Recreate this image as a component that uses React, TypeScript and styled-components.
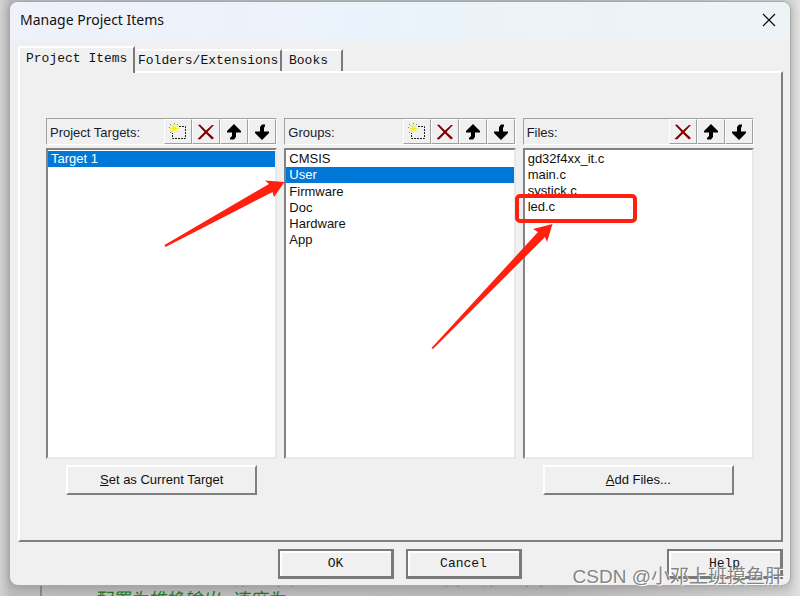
import React from "react";
import styled, { createGlobalStyle, css } from "styled-components";

const Global = createGlobalStyle`
  *, *::before, *::after { box-sizing: border-box; }
  html, body, #root { height: 100%; margin: 0; }
  body {
    overflow: hidden;
    font-family: "Liberation Sans", Arial, sans-serif;
    font-size: 13px;
    color: #111;
  }
  button { font: inherit; color: inherit; padding: 0; margin: 0; border-radius: 0; }
`;

const Desktop = styled.div`
  position: relative;
  height: 100vh;
  padding: 1px 9px 10px;
  overflow: hidden;
  background: linear-gradient(90deg, #d2d2d2 0, #bdbdbd 10px, #b9b9b9 70%, #d4d4d4 790px, #e2e2e2 100%);
`;

const Editor = styled.div`
  position: absolute;
  left: 0;
  right: 0;
  bottom: -16px;
  padding-left: 72px;
  color: #1d7a1d;
  font: italic 18px/21px "Liberation Mono", "Noto Sans CJK SC", monospace;
  white-space: pre;

  &::before {
    content: "";
    position: absolute;
    left: 40px;
    top: 0;
    bottom: 0;
    border-left: 2px solid #8c8c8c;
  }
`;

const Dialog = styled.main`
  position: relative;
  display: flex;
  flex-direction: column;
  height: 100%;
  background: #f0f0f0;
  border: 1px solid #a9a9a9;
  border-radius: 9px;
  overflow: hidden;
  box-shadow: 0 2px 10px rgba(0, 0, 0, 0.2);
`;

const TitleBar = styled.header`
  display: flex;
  align-items: center;
  justify-content: space-between;
  flex: none;
  height: 37px;
  padding: 0 12px 2px 10px;
  background: linear-gradient(90deg, #f0f1fa, #eaf3fb 45%, #eef3f6);
`;

const Title = styled.h1`
  margin: 0;
  font: 400 14px/20px "Noto Sans", "Open Sans", sans-serif;
`;

const CloseButton = styled.button`
  display: flex;
  align-items: center;
  justify-content: center;
  width: 18px;
  height: 18px;
  border: 0;
  background: none;
`;

const Tabs = styled.div`
  display: flex;
  align-items: flex-end;
  flex: none;
  margin: 7px 8px 0 8px;
  height: 25px;
  font: 13px/20px "Liberation Mono", monospace;
`;

const Tab = styled.button<{ $active?: boolean; $width: number; $indent: number }>`
  flex: 0 1 ${(p) => p.$width}px;
  height: 22px;
  padding: 0 0 0 ${(p) => p.$indent}px;
  border: solid;
  border-width: 2px 2px 0 ${(p) => (p.$active ? 2 : 0)}px;
  border-color: #fff #7a7a7a #fff #fff;
  border-top-left-radius: 3px;
  background: #f0f0f0;
  text-align: left;
  white-space: nowrap;
  ${(p) =>
    p.$active &&
    css`
      position: relative;
      z-index: 1;
      margin-bottom: -2px;
      height: 27px;
      padding-bottom: 3px;
    `}
`;

const Page = styled.section`
  display: flex;
  flex-direction: column;
  flex: 1;
  min-height: 0;
  margin: 0 7px 0 8px;
  padding: 45px 27px 44px 26px;
  border: 2px solid;
  border-color: #fff #7f7f7f #7f7f7f #fff;
`;

const Columns = styled.div`
  display: grid;
  grid-template-columns: repeat(3, minmax(0, 1fr));
  column-gap: 7px;
  flex: 1;
  min-height: 0;
`;

const Column = styled.div`
  display: flex;
  flex-direction: column;
  min-height: 0;
`;

const ColumnHeader = styled.div`
  display: flex;
  align-items: stretch;
  flex: none;
  height: 27px;
  margin-bottom: 3px;
  padding-left: 3px;
  border: 1px solid;
  border-color: #a0a0a0 #fff #fff #a0a0a0;
`;

const ColumnTitle = styled.h2`
  flex: 1;
  margin: 0;
  font-size: 13px;
  font-weight: 400;
  line-height: 27px;
  color: #1a1a2a;
`;

const Tool = styled.button`
  display: flex;
  align-items: center;
  justify-content: center;
  width: 28px;
  border: 1px solid;
  border-color: #fff #a0a0a0 #a0a0a0 #fff;
  background: #f0f0f0;
`;

const List = styled.ul`
  flex: 1;
  min-height: 0;
  margin: 0;
  padding: 1px 0 0;
  border: 2px solid;
  border-color: #828282 #e8e8e8 #e8e8e8 #828282;
  background: #fff;
  list-style: none;
`;

const Item = styled.li<{ $selected?: boolean }>`
  height: 16px;
  padding-left: 3px;
  margin-bottom: ${(p) => (p.$selected ? 1 : 0)}px;
  line-height: 16px;
  color: ${(p) => (p.$selected ? "#fff" : "#111")};
  background: ${(p) => (p.$selected ? "#0078d7" : "transparent")};
`;

const Action = styled.div`
  display: flex;
  flex: none;
  height: 37px;
  padding: 6px 20px 0;
`;

const RaisedButton = styled.button`
  flex: 1;
  height: 30px;
  padding-bottom: 2px;
  border: 2px solid;
  border-color: #fff #7f7f7f #7f7f7f #fff;
  background: #f0f0f0;
`;

const Footer = styled.footer`
  display: flex;
  justify-content: flex-end;
  flex: none;
  padding: 7px 7px 6px;
  font: 13px/20px "Liberation Mono", monospace;
`;

const FooterButton = styled.button<{ $gap?: number }>`
  width: 116px;
  height: 30px;
  margin-left: ${(p) => p.$gap ?? 0}px;
  border: solid #7a7a7a;
  border-width: 2px 3px 3px 2px;
  background: #f0f0f0;
  box-shadow: inset 2px 2px #fff;
`;

const Highlight = styled.div`
  position: absolute;
  left: 515px;
  top: 194px;
  width: 122px;
  height: 29px;
  border: 4px solid #ff2010;
  border-radius: 5px;
`;

const Arrows = styled.svg`
  position: absolute;
  left: 0;
  top: 0;
  pointer-events: none;
`;

const Watermark = styled.div`
  position: absolute;
  right: 16px;
  bottom: 6px;
  color: #858585;
  font: 19px/26px "Liberation Sans", "Noto Sans CJK SC", sans-serif;
  text-shadow: 1px 1px #fff;
  white-space: nowrap;
`;

const NewIcon = () => (
  <svg width="18" height="18" viewBox="0 0 18 18" aria-hidden="true">
    <path d="M10 3.500H16.500V15.500H3.500V10" fill="none" stroke="#222" strokeDasharray="2 1" />
    <path d="M5 1V10M1 5.500H9.500M2 2L8.500 9M8.500 2L2 9" stroke="#f4ec1c" />
    <path d="M1 1.500h1M8 1.500h1M1 9.500h1M0 4.500h1M5 0.500h1" stroke="#888" />
  </svg>
);

const DeleteIcon = () => (
  <svg width="18" height="16" viewBox="0 0 18 16" aria-hidden="true">
    <path d="M1 1L3 .5L9 6.500L15 1L17 1L10.500 8L17 14L15 15.500L9 9.500L3 15.500L.5 15L7.500 8Z" fill="#800000" />
  </svg>
);

const UpIcon = () => (
  <svg width="16" height="16" viewBox="0 0 16 16" aria-hidden="true">
    <path d="M8 0L15 7V8.500H10V13L8 15.500H4V14L6 12V8.500H1V7Z" fill="#000" />
  </svg>
);

const DownIcon = () => (
  <svg width="16" height="16" viewBox="0 0 16 16" aria-hidden="true">
    <path d="M8 16L1 9V7.500H6V3L8 .5H11V2L10 4V7.500H15V9Z" fill="#000" />
  </svg>
);

type ColumnData = { title: string; items: string[]; selected?: string; creatable?: boolean; action?: [string, string] };

const columns: ColumnData[] = [
  { title: "Project Targets:", items: ["Target 1"], selected: "Target 1", creatable: true, action: ["S", "et as Current Target"] },
  { title: "Groups:", items: ["CMSIS", "User", "Firmware", "Doc", "Hardware", "App"], selected: "User", creatable: true },
  { title: "Files:", items: ["gd32f4xx_it.c", "main.c", "systick.c", "led.c"], action: ["A", "dd Files..."] },
];

export default function App() {
  return (
    <>
      <Global />
      <Desktop>
        <Editor>{"//             第三个参数是 GPIO 的速度  第四个参数是\n  配置为推挽输出,速度为"}</Editor>
        <Dialog>
          <TitleBar>
            <Title>Manage Project Items</Title>
            <CloseButton aria-label="Close">
              <svg width="14" height="14" viewBox="0 0 14 14" aria-hidden="true">
                <path d="M1 1L13 13M13 1L1 13" stroke="#111" strokeWidth="1.300" />
              </svg>
            </CloseButton>
          </TitleBar>
          <Tabs role="tablist">
            <Tab role="tab" aria-selected="true" $active $width={117} $indent={6}>Project Items</Tab>
            <Tab role="tab" aria-selected="false" $width={147} $indent={3}>Folders/Extensions</Tab>
            <Tab role="tab" aria-selected="false" $width={61} $indent={7}>Books</Tab>
          </Tabs>
          <Page>
            <Columns>
              {columns.map((c) => (
                <Column key={c.title}>
                  <ColumnHeader>
                    <ColumnTitle>{c.title}</ColumnTitle>
                    {c.creatable && <Tool aria-label="New"><NewIcon /></Tool>}
                    <Tool aria-label="Delete"><DeleteIcon /></Tool>
                    <Tool aria-label="Move up"><UpIcon /></Tool>
                    <Tool aria-label="Move down"><DownIcon /></Tool>
                  </ColumnHeader>
                  <List>
                    {c.items.map((i) => (
                      <Item key={i} $selected={i === c.selected}>{i}</Item>
                    ))}
                  </List>
                  <Action>
                    {c.action && (
                      <RaisedButton><u>{c.action[0]}</u>{c.action[1]}</RaisedButton>
                    )}
                  </Action>
                </Column>
              ))}
            </Columns>
          </Page>
          <Footer>
            <FooterButton>OK</FooterButton>
            <FooterButton $gap={12}>Cancel</FooterButton>
            <FooterButton $gap={145}>Help</FooterButton>
          </Footer>
        </Dialog>
        <Highlight />
        <Arrows width="800" height="596" viewBox="0 0 800 596" aria-hidden="true">
          <path d="M164.500 245L269 184L265 180.500L284.500 182L274 197L272.500 192L165.500 247Z" fill="#ff2010" />
          <path d="M431.500 348L538 232L533 229L552.500 224L547 242L545 237L433 349Z" fill="#ff2010" />
        </Arrows>
        <Watermark>CSDN @小邓上班摸鱼肝</Watermark>
      </Desktop>
    </>
  );
}
